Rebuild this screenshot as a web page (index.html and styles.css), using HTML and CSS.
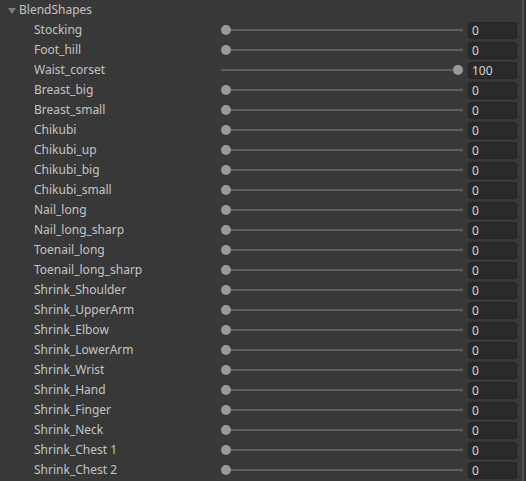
FILE: index.html
```html
<!DOCTYPE html>
<html>
<head>
<meta charset="utf-8">
<link rel="stylesheet" href="styles.css">
</head>
<body>
<div class="panel">
  <div class="content">
    <div class="header"><span class="tri"></span><span class="title">BlendShapes</span></div>
    <div class="row"><span class="label">Stocking</span><div class="slider"><div class="track"></div><div class="knob" style="left:0px"></div></div><div class="field">0</div></div>
    <div class="row"><span class="label">Foot_hill</span><div class="slider"><div class="track"></div><div class="knob" style="left:0px"></div></div><div class="field">0</div></div>
    <div class="row"><span class="label">Waist_corset</span><div class="slider"><div class="track"></div><div class="knob" style="left:232px"></div></div><div class="field">100</div></div>
    <div class="row"><span class="label">Breast_big</span><div class="slider"><div class="track"></div><div class="knob" style="left:0px"></div></div><div class="field">0</div></div>
    <div class="row"><span class="label">Breast_small</span><div class="slider"><div class="track"></div><div class="knob" style="left:0px"></div></div><div class="field">0</div></div>
    <div class="row"><span class="label">Chikubi</span><div class="slider"><div class="track"></div><div class="knob" style="left:0px"></div></div><div class="field">0</div></div>
    <div class="row"><span class="label">Chikubi_up</span><div class="slider"><div class="track"></div><div class="knob" style="left:0px"></div></div><div class="field">0</div></div>
    <div class="row"><span class="label">Chikubi_big</span><div class="slider"><div class="track"></div><div class="knob" style="left:0px"></div></div><div class="field">0</div></div>
    <div class="row"><span class="label">Chikubi_small</span><div class="slider"><div class="track"></div><div class="knob" style="left:0px"></div></div><div class="field">0</div></div>
    <div class="row"><span class="label">Nail_long</span><div class="slider"><div class="track"></div><div class="knob" style="left:0px"></div></div><div class="field">0</div></div>
    <div class="row"><span class="label">Nail_long_sharp</span><div class="slider"><div class="track"></div><div class="knob" style="left:0px"></div></div><div class="field">0</div></div>
    <div class="row"><span class="label">Toenail_long</span><div class="slider"><div class="track"></div><div class="knob" style="left:0px"></div></div><div class="field">0</div></div>
    <div class="row"><span class="label">Toenail_long_sharp</span><div class="slider"><div class="track"></div><div class="knob" style="left:0px"></div></div><div class="field">0</div></div>
    <div class="row"><span class="label">Shrink_Shoulder</span><div class="slider"><div class="track"></div><div class="knob" style="left:0px"></div></div><div class="field">0</div></div>
    <div class="row"><span class="label">Shrink_UpperArm</span><div class="slider"><div class="track"></div><div class="knob" style="left:0px"></div></div><div class="field">0</div></div>
    <div class="row"><span class="label">Shrink_Elbow</span><div class="slider"><div class="track"></div><div class="knob" style="left:0px"></div></div><div class="field">0</div></div>
    <div class="row"><span class="label">Shrink_LowerArm</span><div class="slider"><div class="track"></div><div class="knob" style="left:0px"></div></div><div class="field">0</div></div>
    <div class="row"><span class="label">Shrink_Wrist</span><div class="slider"><div class="track"></div><div class="knob" style="left:0px"></div></div><div class="field">0</div></div>
    <div class="row"><span class="label">Shrink_Hand</span><div class="slider"><div class="track"></div><div class="knob" style="left:0px"></div></div><div class="field">0</div></div>
    <div class="row"><span class="label">Shrink_Finger</span><div class="slider"><div class="track"></div><div class="knob" style="left:0px"></div></div><div class="field">0</div></div>
    <div class="row"><span class="label">Shrink_Neck</span><div class="slider"><div class="track"></div><div class="knob" style="left:0px"></div></div><div class="field">0</div></div>
    <div class="row"><span class="label">Shrink_Chest 1</span><div class="slider"><div class="track"></div><div class="knob" style="left:0px"></div></div><div class="field">0</div></div>
    <div class="row"><span class="label">Shrink_Chest 2</span><div class="slider"><div class="track"></div><div class="knob" style="left:0px"></div></div><div class="field">0</div></div>
  </div>
  <div class="scrollbar"></div>
</div>
</body>
</html>
```

FILE: styles.css
```css
html, body {
  margin: 0;
  padding: 0;
  background: #383838;
  overflow: hidden;
}
.panel {
  display: flex;
  width: 526px;
  height: 481px;
  font-family: "Noto Sans", "Open Sans", sans-serif;
  font-size: 12px;
  color: #c4c4c4;
}
.content {
  width: 522px;
  display: flex;
  flex-direction: column;
}
.header {
  height: 20px;
  display: flex;
  align-items: center;
  padding-left: 8px;
}
.tri {
  width: 0;
  height: 0;
  border-left: 4px solid transparent;
  border-right: 4px solid transparent;
  border-top: 6px solid #7d7d7d;
  margin-right: 3px;
  margin-top: 2px;
}
.title {
  line-height: 20px;
}
.row {
  height: 20px;
  display: flex;
  align-items: center;
  padding-left: 34px;
}
.label {
  width: 187px;
  line-height: 20px;
  white-space: nowrap;
}
.slider {
  position: relative;
  width: 242px;
  height: 20px;
}
.track {
  position: absolute;
  left: 0;
  right: 0;
  top: 9px;
  height: 2px;
  background: #5e5e5e;
}
.knob {
  position: absolute;
  top: 5px;
  width: 10px;
  height: 10px;
  border-radius: 50%;
  background: #999999;
}
.field {
  margin-left: 5px;
  width: 49px;
  height: 17px;
  box-sizing: border-box;
  border: 1px solid #232323;
  border-radius: 3px;
  background: #2a2a2a;
  color: #d2d2d2;
  padding-left: 3px;
  line-height: 15px;
  margin-top: 1px;
}
.scrollbar {
  width: 2px;
  background: #505050;
  border-right: 2px solid #303030;
}
```
